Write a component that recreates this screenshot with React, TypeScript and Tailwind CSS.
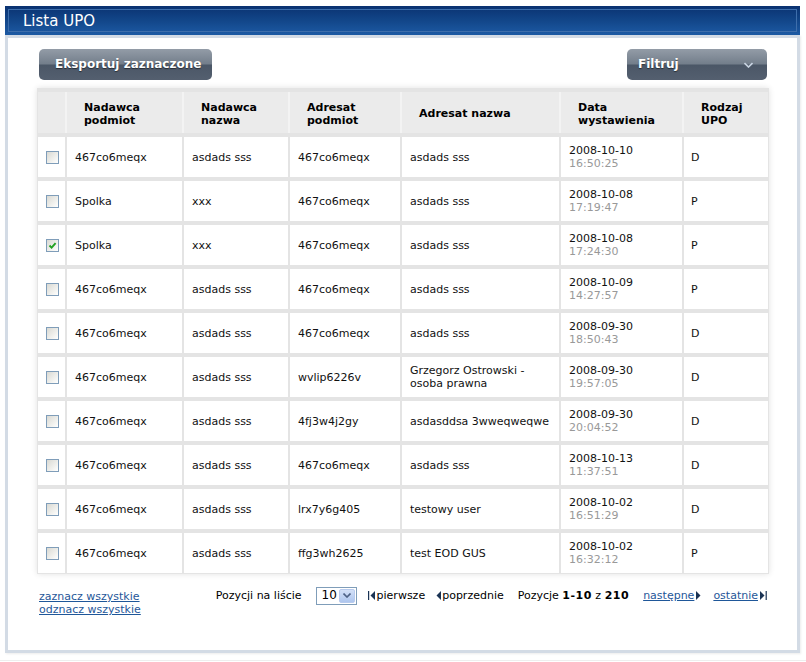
import React from "react";

type Row = {
  checked?: boolean;
  np: string;
  nn: string;
  ap: string;
  an: string;
  d: string;
  t: string;
  r: string;
};

const rows: Row[] = [
  { np: "467co6meqx", nn: "asdads sss", ap: "467co6meqx", an: "asdads sss", d: "2008-10-10", t: "16:50:25", r: "D" },
  { np: "Spolka", nn: "xxx", ap: "467co6meqx", an: "asdads sss", d: "2008-10-08", t: "17:19:47", r: "P" },
  { checked: true, np: "Spolka", nn: "xxx", ap: "467co6meqx", an: "asdads sss", d: "2008-10-08", t: "17:24:30", r: "P" },
  { np: "467co6meqx", nn: "asdads sss", ap: "467co6meqx", an: "asdads sss", d: "2008-10-09", t: "14:27:57", r: "P" },
  { np: "467co6meqx", nn: "asdads sss", ap: "467co6meqx", an: "asdads sss", d: "2008-09-30", t: "18:50:43", r: "D" },
  { np: "467co6meqx", nn: "asdads sss", ap: "wvlip6226v", an: "Grzegorz Ostrowski - osoba prawna", d: "2008-09-30", t: "19:57:05", r: "D" },
  { np: "467co6meqx", nn: "asdads sss", ap: "4fj3w4j2gy", an: "asdasddsa 3wweqweqwe", d: "2008-09-30", t: "20:04:52", r: "D" },
  { np: "467co6meqx", nn: "asdads sss", ap: "467co6meqx", an: "asdads sss", d: "2008-10-13", t: "11:37:51", r: "D" },
  { np: "467co6meqx", nn: "asdads sss", ap: "lrx7y6g405", an: "testowy user", d: "2008-10-02", t: "16:51:29", r: "D" },
  { np: "467co6meqx", nn: "asdads sss", ap: "ffg3wh2625", an: "test EOD GUS", d: "2008-10-02", t: "16:32:12", r: "P" },
];

const GRID = "grid grid-cols-[27px_115px_104px_110px_157px_121px_84px] gap-x-[2px]";

function Checkbox({ checked }: { checked?: boolean }) {
  return (
    <div className="relative w-[13px] h-[13px] border border-[#7f9db9] bg-[linear-gradient(135deg,#d9d9d3_0%,#f4f4f1_70%,#ffffff_100%)]">
      {checked && (
        <svg className="absolute left-[1px] top-[1px]" width="9" height="9" viewBox="0 0 9 9">
          <path d="M1.5 4.5 L3.6 6.6 L7.6 2.2" fill="none" stroke="#21a121" strokeWidth="1.9" />
        </svg>
      )}
    </div>
  );
}

function Btn({ children, className }: { children: React.ReactNode; className: string }) {
  return (
    <div
      className={
        "h-[31px] rounded-[5px] flex items-center text-white font-bold text-[12px] [text-shadow:0_1px_1px_rgba(0,0,0,0.5)] bg-[linear-gradient(to_bottom,#939ca7_0%,#737e8b_48%,#4b5767_52%,#545f6f_100%)] " +
        className
      }
    >
      {children}
    </div>
  );
}

function TriLeft() {
  return (
    <svg width="5" height="9" viewBox="0 0 5 9" className="inline-block">
      <polygon points="5,0 5,9 0.5,4.5" fill="#1a3354" />
    </svg>
  );
}
function TriRight() {
  return (
    <svg width="5" height="9" viewBox="0 0 5 9" className="inline-block">
      <polygon points="0,0 0,9 4.5,4.5" fill="#1a3354" />
    </svg>
  );
}

export default function App() {
  return (
    <div className="w-[806px] h-[662px] bg-white font-['DejaVu_Sans',sans-serif] text-[11px] leading-[13px] text-[#111]">
      <div className="pt-[6px] pl-[5px] w-[800px]">
        {/* Title bar */}
        <div className="h-[29px] p-[3px] bg-[linear-gradient(to_bottom,#0a3271_0%,#124689_50%,#1d5aa4_100%)]">
          <div className="h-full border border-[#3e6eab] flex items-center pl-[14px]">
            <span className="text-white text-[15px] leading-[18px]">Lista UPO</span>
          </div>
        </div>
        {/* Panel */}
        <div className="h-[618px] border-[3px] border-[#d3dbe5] bg-white pl-[29px] pr-[28px] pt-[11px] shadow-[1px_1px_2px_rgba(0,0,0,0.08)]">
          <div className="flex justify-between px-[2px]">
            <Btn className="w-[173px] pl-[16px]">Eksportuj zaznaczone</Btn>
            <Btn className="w-[140px] pl-[11px] justify-between pr-[14px]">
              <span>Filtruj</span>
              <svg width="9" height="6" viewBox="0 0 9 6">
                <path d="M0.5 1 L4.5 5 L8.5 1" fill="none" stroke="#c9d4e2" strokeWidth="1.6" />
              </svg>
            </Btn>
          </div>

          {/* Table */}
          <div className="mt-[8px] bg-[#e4e4e4] pt-[4px] px-[1px] pb-[1px] shadow-[0_0_6px_rgba(0,0,0,0.12)]">
            <div className={GRID + " bg-[#f3f3f3]"}>
              {[
                ["", ""],
                ["Nadawca", "podmiot"],
                ["Nadawca", "nazwa"],
                ["Adresat", "podmiot"],
                ["Adresat nazwa", ""],
                ["Data", "wystawienia"],
                ["Rodzaj", "UPO"],
              ].map(([a, b], i) => (
                <div key={i} className="h-[41px] bg-[#ebebeb] pl-[17px] pt-[2px] flex flex-col justify-center font-bold text-black">
                  {a && <div>{a}</div>}
                  {b && <div>{b}</div>}
                </div>
              ))}
            </div>
            <div className={GRID + " gap-y-[4px] mt-[4px]"}>
              {rows.map((r, i) => (
                <React.Fragment key={i}>
                  <div className="h-[40px] bg-white flex items-center justify-center pl-[1px]">
                    <Checkbox checked={r.checked} />
                  </div>
                  <div className="h-[40px] bg-white flex items-center pl-[8px]">{r.np}</div>
                  <div className="h-[40px] bg-white flex items-center pl-[8px]">{r.nn}</div>
                  <div className="h-[40px] bg-white flex items-center pl-[8px]">{r.ap}</div>
                  <div className="h-[40px] bg-white flex items-center pl-[8px] pr-[1px]">
                    <div>{r.an}</div>
                  </div>
                  <div className="h-[40px] bg-white flex flex-col justify-center pl-[8px]">
                    <div>{r.d}</div>
                    <div className="text-[#999]">{r.t}</div>
                  </div>
                  <div className="h-[40px] bg-white flex items-center pl-[7px]">{r.r}</div>
                </React.Fragment>
              ))}
            </div>
          </div>

          {/* Footer */}
          <div className="mt-[12px] flex justify-between items-start pl-[2px] pr-[2px]">
            <div className="pt-[4px] flex flex-col">
              <a className="text-[#1f5799] underline">zaznacz wszystkie</a>
              <a className="text-[#1f5799] underline">odznacz wszystkie</a>
            </div>
            <div className="flex items-center h-[18px] text-black pt-[1px]">
              <span>Pozycji na liście</span>
              <div className="ml-[14px] w-[41px] h-[18px] border border-[#7f9db9] bg-white flex items-center justify-between p-[1px]">
                <span className="pl-[4px] text-[12px]">10</span>
                <div className="w-[16px] h-full rounded-[2px] bg-[linear-gradient(to_bottom,#d3e0f7,#aec6ee)] border border-[#b8cbee] flex items-center justify-center">
                  <svg width="8" height="5" viewBox="0 0 8 5">
                    <path d="M0.5 0.5 L4 4 L7.5 0.5" fill="none" stroke="#4d6185" strokeWidth="1.6" />
                  </svg>
                </div>
              </div>
              <span className="ml-[11px] flex items-center">
                <svg width="7" height="9" viewBox="0 0 7 9" className="mr-[2px]">
                  <rect x="0" y="0" width="1.2" height="9" fill="#1a3354" />
                  <polygon points="7,0 7,9 2.5,4.5" fill="#1a3354" />
                </svg>
                pierwsze
              </span>
              <span className="ml-[11px] flex items-center gap-[1px]">
                <TriLeft />
                poprzednie
              </span>
              <span className="ml-[14px]">
                Pozycje <b className="tracking-[0.5px]">1-10</b> z <b className="tracking-[0.5px]">210</b>
              </span>
              <span className="ml-[14px] flex items-center gap-[2px]">
                <a className="text-[#1f5799] underline">następne</a>
                <TriRight />
              </span>
              <span className="ml-[12px] flex items-center gap-[2px]">
                <a className="text-[#1f5799] underline">ostatnie</a>
                <svg width="7" height="9" viewBox="0 0 7 9">
                  <polygon points="0,0 0,9 4.5,4.5" fill="#1a3354" />
                  <rect x="5.6" y="0" width="1.2" height="9" fill="#1a3354" />
                </svg>
              </span>
            </div>
          </div>
        </div>
      </div>
      <div className="mt-[7px] h-px bg-[#eeeeee]" />
    </div>
  );
}
